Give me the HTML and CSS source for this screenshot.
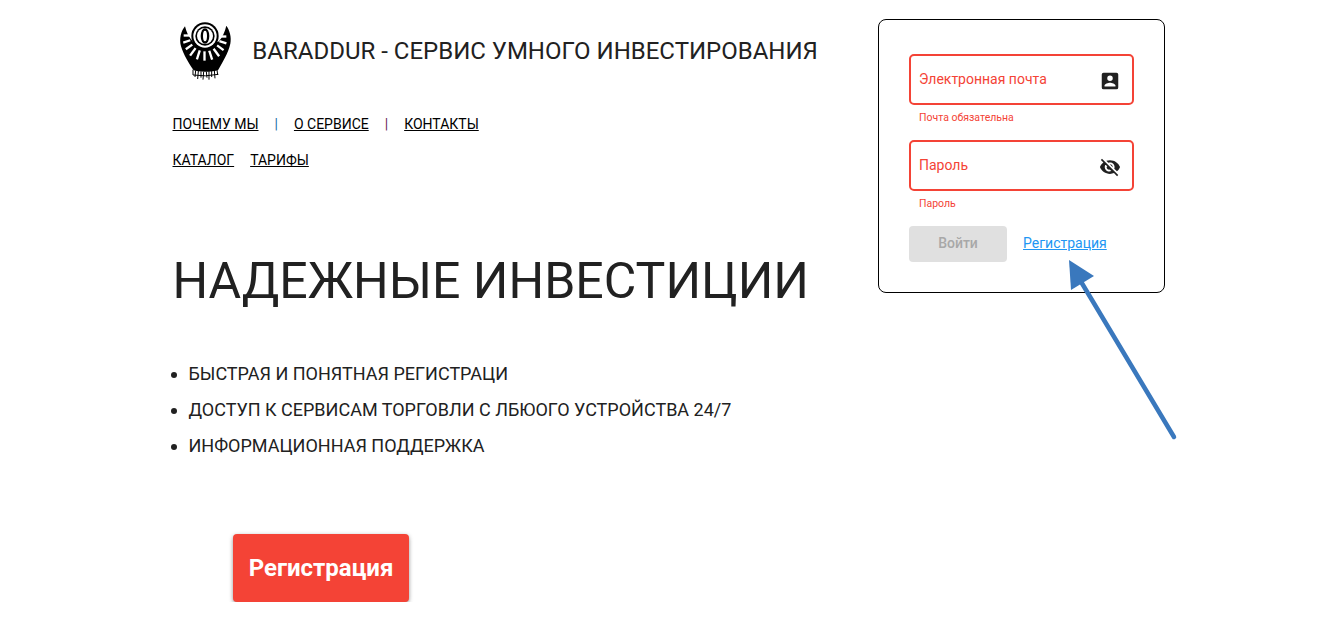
FILE: index.html
```html
<!DOCTYPE html>
<html lang="ru">
<head>
<meta charset="utf-8">
<title>Baraddur</title>
<link rel="stylesheet" href="styles.css">
</head>
<body>
<div class="page">
  <main class="left">
    <header class="brand">
      <svg class="logo" viewBox="42 30 160 180" width="53.330" height="60" aria-hidden="true">
        <path d="M60 46 C48 60 42 84 48 106 C56 132 72 158 86 178 C100 184 146 184 160 176 C172 154 190 126 196 98 C200 78 194 58 184 44 C180 62 172 80 160 92 L84 92 C72 80 64 64 60 46 Z" fill="#000"/>
        <g fill="#fff">
          <rect x="115" y="121" width="7" height="28" transform="rotate(0 120 75)"/>
          <rect x="115" y="121" width="7" height="28" transform="rotate(18 120 75)"/>
          <rect x="115" y="121" width="7" height="28" transform="rotate(36 120 75)"/>
          <rect x="115" y="121" width="7" height="24" transform="rotate(54 120 75)"/>
          <rect x="115" y="121" width="7" height="22" transform="rotate(72 120 75)"/>
          <rect x="115" y="119" width="7" height="20" transform="rotate(90 120 75)"/>
          <rect x="115" y="121" width="7" height="28" transform="rotate(-18 120 75)"/>
          <rect x="115" y="121" width="7" height="28" transform="rotate(-36 120 75)"/>
          <rect x="115" y="121" width="7" height="24" transform="rotate(-54 120 75)"/>
          <rect x="115" y="121" width="7" height="22" transform="rotate(-72 120 75)"/>
          <rect x="115" y="119" width="7" height="20" transform="rotate(-90 120 75)"/>
        </g>
        <circle cx="120" cy="75" r="41" fill="#000"/>
        <circle cx="120" cy="75" r="35" fill="#fff"/>
        <circle cx="120" cy="75" r="29" fill="#000"/>
        <circle cx="120" cy="75" r="24" fill="#fff"/>
        <ellipse cx="120" cy="75" rx="13" ry="23" fill="#000"/>
        <ellipse cx="120" cy="75" rx="6" ry="16" fill="#fff"/>
        <path d="M84 176 L84 192 M92 178 L90 198 M100 180 L98 204 M108 181 L108 200 M116 182 L114 206 M124 182 L126 200 M132 181 L132 206 M140 180 L140 198 M148 178 L150 202 M156 176 L158 192 M84 192 Q120 198 160 190" stroke="#000" stroke-width="3" fill="none"/>
      </svg>
      <h2 class="title">BARADDUR - СЕРВИС УМНОГО ИНВЕСТИРОВАНИЯ</h2>
    </header>
    <nav class="nav">
      <div class="nav-row">
        <a href="#">ПОЧЕМУ МЫ</a><span class="sep sep-blue">|</span><a href="#">О СЕРВИСЕ</a><span class="sep sep-purple">|</span><a href="#">КОНТАКТЫ</a>
      </div>
      <div class="nav-row nav-row-tight">
        <a href="#">КАТАЛОГ</a><a href="#">ТАРИФЫ</a>
      </div>
    </nav>
    <h1 class="headline">НАДЕЖНЫЕ ИНВЕСТИЦИИ</h1>
    <ul class="features">
      <li>БЫСТРАЯ И ПОНЯТНАЯ РЕГИСТРАЦИ</li>
      <li>ДОСТУП К СЕРВИСАМ ТОРГОВЛИ С ЛБЮОГО УСТРОЙСТВА 24/7</li>
      <li>ИНФОРМАЦИОННАЯ ПОДДЕРЖКА</li>
    </ul>
    <button class="cta" type="button">Регистрация</button>
  </main>
  <aside class="card">
    <div class="field">
      <span class="field-label">Электронная почта</span>
      <svg class="field-icon" viewBox="0 0 24 24" width="22" height="22" aria-hidden="true"><path d="M3 5v14a2 2 0 0 0 2 2h14a2 2 0 0 0 2-2V5a2 2 0 0 0-2-2H5a2 2 0 0 0-2 2zm12 4a3 3 0 1 1-6 0 3 3 0 0 1 6 0zm-9 8c0-2 4-3.100 6-3.100s6 1.100 6 3.100v1H6v-1z" fill="#212121"/></svg>
    </div>
    <div class="hint">Почта обязательна</div>
    <div class="field">
      <span class="field-label">Пароль</span>
      <svg class="field-icon" viewBox="0 0 24 24" width="22" height="22" aria-hidden="true"><path d="M12 7c2.760 0 5 2.240 5 5 0 .65-.13 1.260-.36 1.830l2.920 2.920c1.510-1.260 2.700-2.890 3.430-4.750-1.730-4.390-6-7.500-11-7.500-1.400 0-2.740.25-3.980.7l2.160 2.160C10.740 7.130 11.350 7 12 7zM2 4.270l2.280 2.280.46.46C3.080 8.300 1.780 10.020 1 12c1.730 4.390 6 7.500 11 7.500 1.550 0 3.030-.3 4.380-.84l.42.42L19.730 22 21 20.730 3.270 3 2 4.270zM7.530 9.800l1.550 1.550c-.05.21-.8.430-.8.650 0 1.660 1.340 3 3 3 .22 0 .44-.3.650-.08l1.550 1.550c-.67.33-1.410.53-2.200.53-2.760 0-5-2.240-5-5 0-.79.2-1.530.53-2.200zm4.310-.78l3.150 3.150.02-.16c0-1.660-1.340-3-3-3l-.17.010z" fill="#212121"/></svg>
    </div>
    <div class="hint">Пароль</div>
    <div class="actions">
      <button class="login" type="button" disabled>Войти</button>
      <a class="register" href="#">Регистрация</a>
    </div>
  </aside>
</div>
<svg class="arrow" viewBox="0 0 1339 622" width="1339" height="622" aria-hidden="true">
  <path d="M1174 437 L1080 280" stroke="#3a78bd" stroke-width="4.500" stroke-linecap="round" fill="none"/>
  <path d="M1069 260 L1094 276 L1071 290 Z" fill="#3a78bd"/>
</svg>
</body>
</html>
```
FILE: styles.css
```css
html, body {
  margin: 0;
  padding: 0;
  background: #fff;
  overflow: hidden;
}
body {
  font-family: Roboto, "Liberation Sans", sans-serif;
  color: #212121;
}
.page {
  display: flex;
  align-items: flex-start;
  padding: 19px 0 0 172.500px;
}
.left {
  width: 705.500px;
  flex: none;
}
.brand {
  display: flex;
  align-items: center;
  height: 64px;
}
.logo {
  margin-left: 6px;
  flex: none;
}
.title {
  margin: 0 0 0 20.500px;
  font-size: 24px;
  font-weight: 400;
  line-height: 64px;
  white-space: nowrap;
}
.nav {
  margin-top: 23px;
  font-size: 14px;
  line-height: 36px;
}
.nav-row {
  display: flex;
  height: 36px;
}
.nav-row a {
  color: #000;
  text-decoration: underline;
}
.nav-row-tight {
  gap: 16px;
}
.sep {
  margin: 0 16px;
}
.sep-blue { color: #1a6fa5; }
.sep-purple { color: #6a1a5a; }
.headline {
  margin: 71px 0 0;
  font-size: 50px;
  font-weight: 400;
  line-height: 64px;
  white-space: nowrap;
}
.features {
  margin: 43px 0 0;
  padding: 0 0 0 16px;
  font-size: 18px;
  line-height: 36px;
}
.cta {
  display: block;
  margin: 70px 0 0 60.500px;
  width: 176px;
  height: 68px;
  border: 0;
  border-radius: 4px;
  background: #f44336;
  color: #fff;
  font-family: inherit;
  font-size: 24px;
  font-weight: 700;
  box-shadow: 0 2px 4px -1px rgba(0,0,0,.4), 0 1px 5px rgba(0,0,0,.2);
}
.card {
  box-sizing: border-box;
  width: 287px;
  height: 274px;
  padding: 34px 30px 0;
  border: 1px solid #000;
  border-radius: 8px;
  flex: none;
}
.field {
  box-sizing: border-box;
  display: flex;
  align-items: center;
  justify-content: space-between;
  height: 51px;
  padding: 0 11.500px 0 8px;
  border: 2px solid #f44336;
  border-radius: 5px;
}
.field-label {
  color: #f44336;
  font-size: 14px;
  margin-top: -1px;
}
.field-icon {
  flex: none;
  margin-top: 3px;
}
.hint {
  height: 35px;
  padding: 6px 0 0 10px;
  box-sizing: border-box;
  color: #f44336;
  font-size: 10.500px;
  line-height: 14px;
}
.actions {
  display: flex;
  align-items: center;
}
.login {
  width: 98px;
  height: 36px;
  padding: 0 0 2px;
  border: 0;
  border-radius: 4px;
  background: #e0e0e0;
  color: #a8a8a8;
  font-family: inherit;
  font-size: 14px;
  font-weight: 500;
}
.register {
  margin: -2px 0 0 16px;
  color: #2196f3;
  font-size: 14px;
  text-decoration: underline;
}
.arrow {
  position: absolute;
  left: 0;
  top: 0;
  pointer-events: none;
}
```
